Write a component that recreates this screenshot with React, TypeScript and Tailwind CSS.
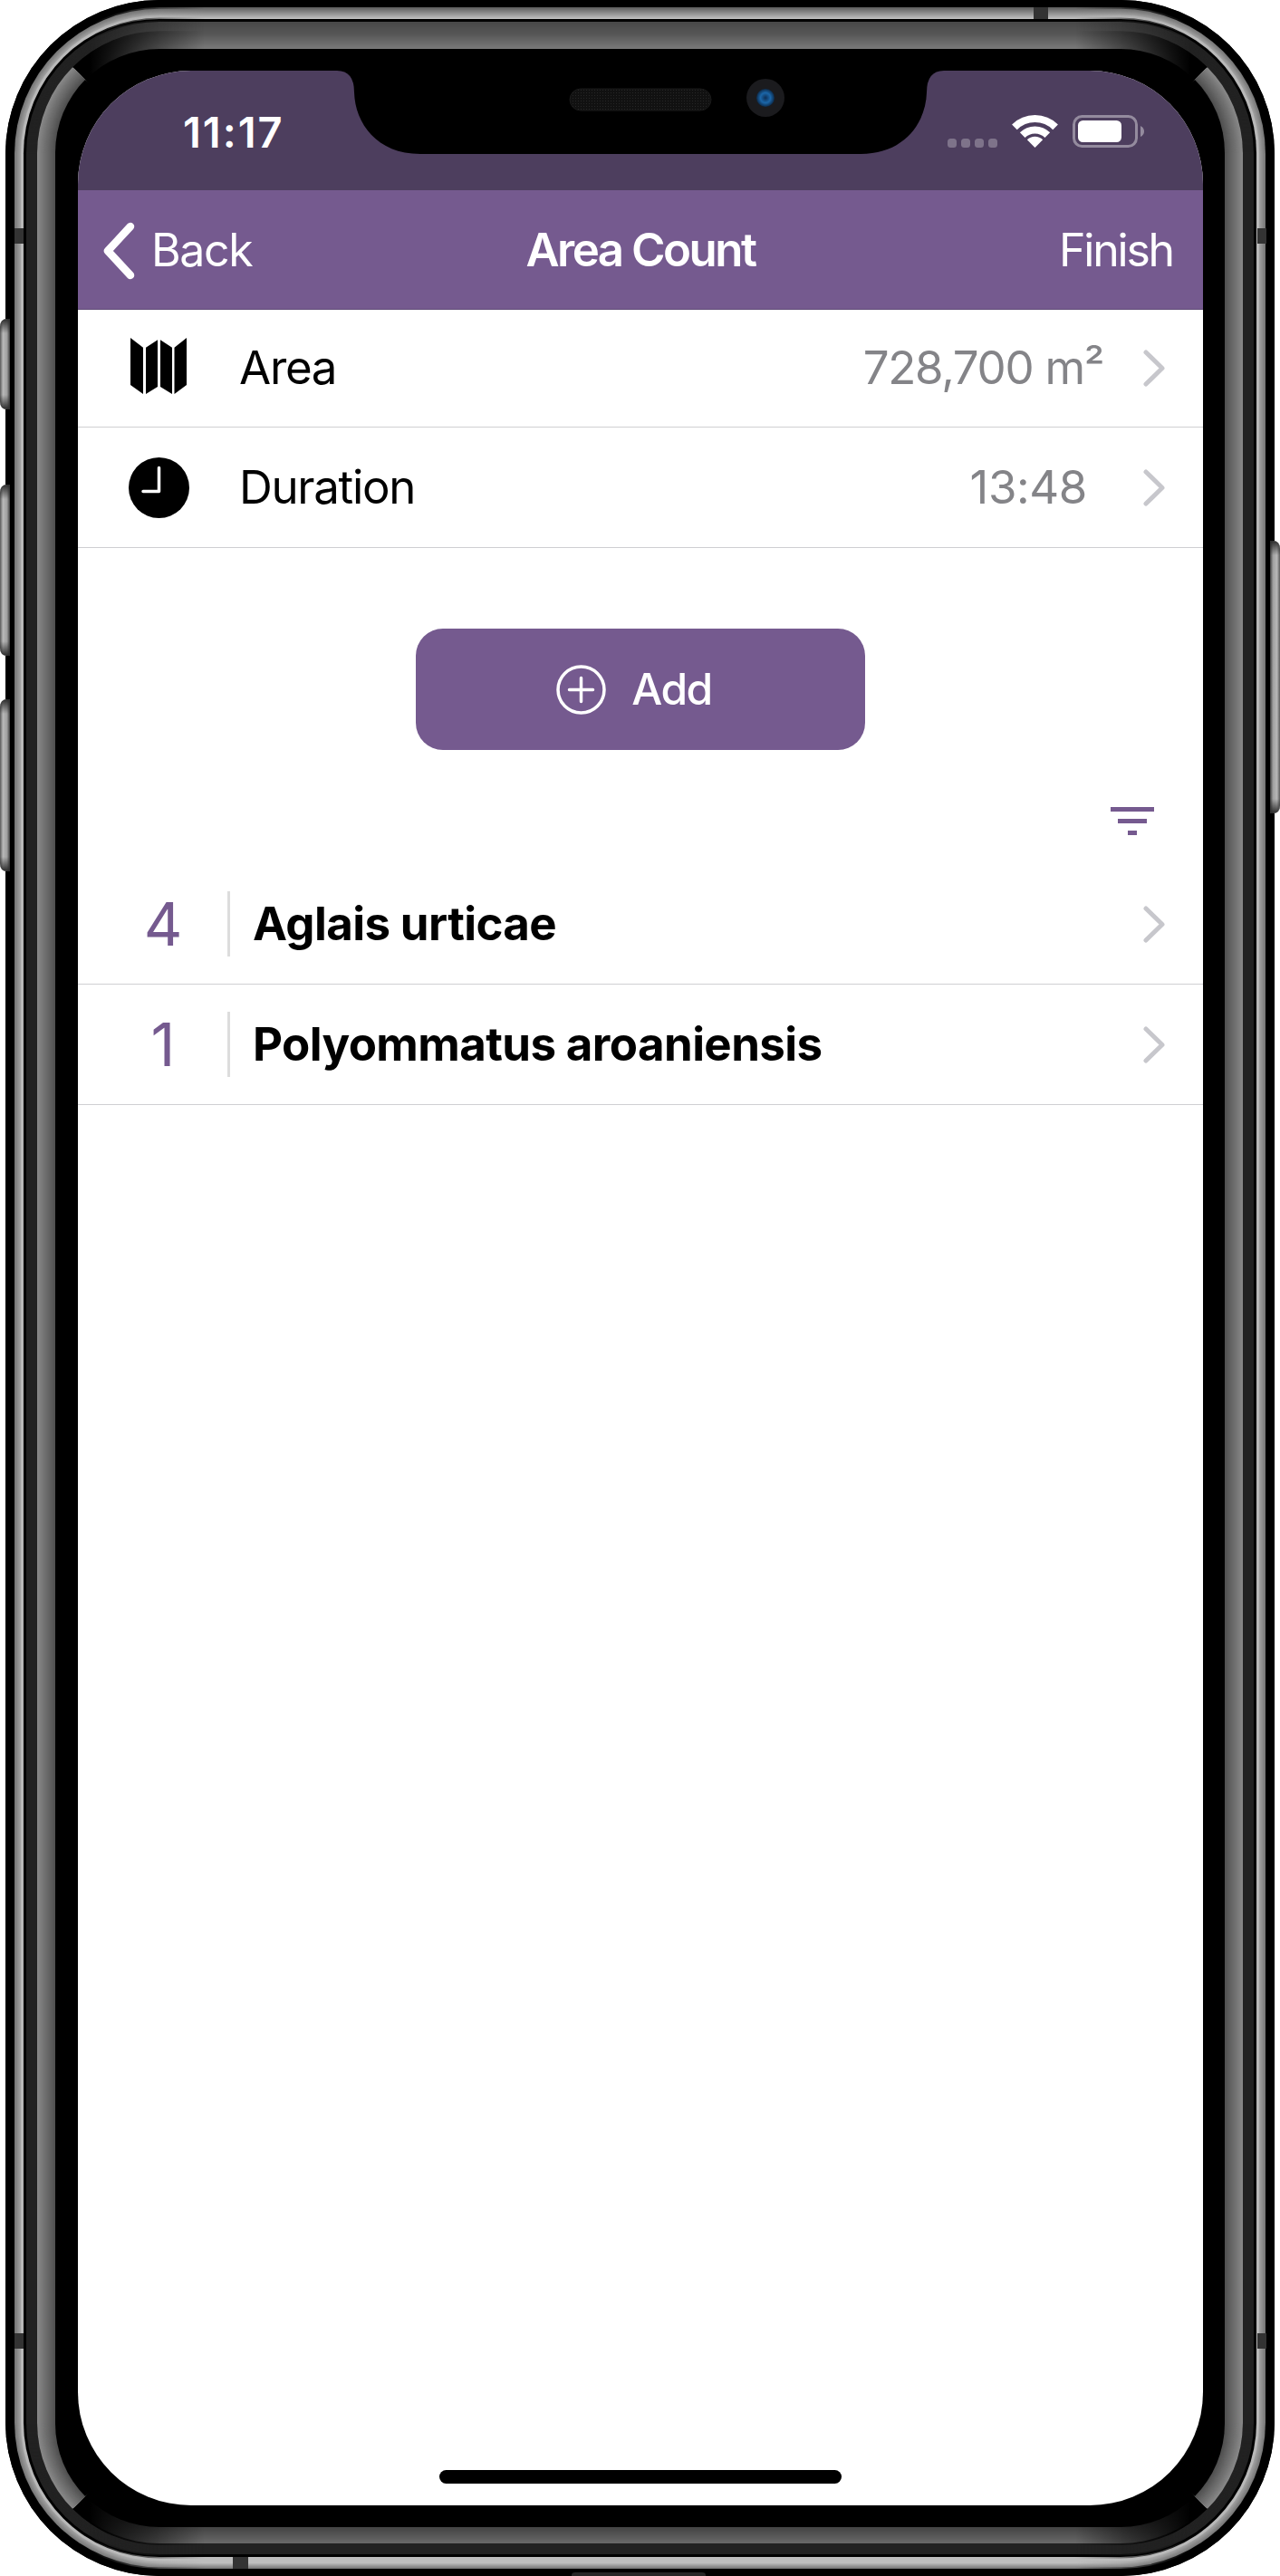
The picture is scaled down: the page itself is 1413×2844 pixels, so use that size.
import React from "react";

type Ring = { inset: number; gray: number };

// a run of 1px rings going from one gray to another, outside to inside
const ramp = (a: number, b: number, from: number, to: number): Ring[] => {
  const steps = Math.max(1, Math.round(b - a));
  return Array.from({ length: steps }, (_, i) => ({
    inset: a + ((b - a) * i) / steps,
    gray: Math.round(from + ((to - from) * i) / Math.max(1, steps - 1)),
  }));
};

const y = (v: number) => v / 0.975;

const topRings = [
  ...ramp(y(8), y(21), 95, 190),
  ...ramp(y(21), y(24), 0, 0),
  ...ramp(y(24), y(36), 72, 84),
  ...ramp(y(36), y(54), 84, 120),
  ...ramp(y(54), 80, 0, 0),
];
const bottomRings = [
  ...ramp(y(8), y(15), 120, 190),
  ...ramp(y(15), y(21), 190, 190),
  ...ramp(y(21), y(24), 0, 0),
  ...ramp(y(24), y(36), 34, 34),
  ...ramp(y(36), y(54), 104, 68),
  ...ramp(y(54), 80, 0, 0),
];
// runs all the way round the body
const baseRings = [
  ...ramp(0, 10, 0, 0),
  ...ramp(10, 17, 120, 160),
  ...ramp(17, 20, 185, 185),
  ...ramp(20, 23, 0, 0),
  ...ramp(23, 35, 34, 34),
  ...ramp(35, 80, 0, 0),
];
const sideRings = [...ramp(35, 55, 136, 80), ...ramp(55, 80, 0, 0)];

const RingStack = ({ rings, clip, mask }: { rings: Ring[]; clip?: string; mask?: string }) => (
  <g clipPath={clip ? `url(#${clip})` : undefined} mask={mask ? `url(#${mask})` : undefined}>
    {rings.map((r) => (
      <rect
        key={r.inset}
        x={6 + r.inset}
        y={r.inset * 0.975}
        width={1401 - 2 * r.inset}
        height={2844 - 2 * r.inset * 0.975}
        rx={170 - r.inset}
        fill={`rgb(${r.gray},${r.gray},${r.gray})`}
      />
    ))}
  </g>
);

const SideButton = ({ top, height, right }: { top: number; height: number; right?: boolean }) => (
  <g transform={right ? "translate(1413,0) scale(-1,1)" : undefined}>
    <path
      d={`M11 ${top} H8 Q0 ${top} 0 ${top + 9} V${top + height - 9} Q0 ${top + height} 8 ${top + height} H11 Z`}
      fill="url(#btnH)"
    />
    <path
      d={`M11 ${top} H8 Q0 ${top} 0 ${top + 9} V${top + 16} H11 Z`}
      fill="url(#btnTop)"
    />
    <path
      d={`M11 ${top + height} H8 Q0 ${top + height} 0 ${top + height - 9} V${top + height - 16} H11 Z`}
      fill="url(#btnBottom)"
    />
  </g>
);

// the phone body, buttons and antenna bands
const PhoneFrame = () => (
  <svg className="absolute inset-0" width="1413" height="2844" viewBox="0 0 1413 2844">
    <defs>
      <clipPath id="wedgeTop">
        <polygon points="6,0 1407,0 1237,170 176,170" />
      </clipPath>
      <clipPath id="wedgeBottom">
        <polygon points="6,2844 1407,2844 1237,2674 176,2674" />
      </clipPath>
      <clipPath id="wedgeSides">
        <polygon points="6,0 176,170 176,2674 6,2844 0,2844 0,0" />
        <polygon points="1407,0 1237,170 1237,2674 1407,2844 1413,2844 1413,0" />
      </clipPath>
      <linearGradient id="fadeEnds" gradientUnits="userSpaceOnUse" x1="0" x2="1413" y1="0" y2="0">
        <stop offset="0.07" stopColor="#000" />
        <stop offset="0.16" stopColor="#fff" />
        <stop offset="0.84" stopColor="#fff" />
        <stop offset="0.93" stopColor="#000" />
      </linearGradient>
      <mask id="fadeMask" maskUnits="userSpaceOnUse" x="0" y="0" width="1413" height="2844">
        <rect width="1413" height="2844" fill="url(#fadeEnds)" />
      </mask>
      <linearGradient id="btnH" x1="0" x2="1" y1="0" y2="0">
        <stop offset="0" stopColor="#5a5a5a" />
        <stop offset="0.3" stopColor="#b8b8b8" />
        <stop offset="0.7" stopColor="#a0a0a0" />
        <stop offset="1" stopColor="#3a3a3a" />
      </linearGradient>
      <linearGradient id="btnTop" x1="0" x2="0" y1="0" y2="1">
        <stop offset="0" stopColor="#2a2a2a" />
        <stop offset="1" stopColor="#2a2a2a" stopOpacity="0" />
      </linearGradient>
      <linearGradient id="btnBottom" x1="0" x2="0" y1="1" y2="0">
        <stop offset="0" stopColor="#2a2a2a" />
        <stop offset="1" stopColor="#2a2a2a" stopOpacity="0" />
      </linearGradient>
    </defs>
    <rect x="6" y="0" width="1401" height="2844" rx="170" fill="#000" />
    <RingStack rings={baseRings} />
    <RingStack rings={sideRings} clip="wedgeSides" />
    <g mask="url(#fadeMask)">
      <RingStack rings={topRings} clip="wedgeTop" />
      <RingStack rings={bottomRings} clip="wedgeBottom" />
    </g>

    <rect x="16" y="252" width="10" height="17" fill="#333" />
    <rect x="1388" y="252" width="10" height="17" fill="#333" />
    <rect x="16" y="2576" width="10" height="17" fill="#333" />
    <rect x="1388" y="2576" width="10" height="17" fill="#333" />
    <rect x="1141" y="8" width="16" height="13" fill="#333" />
    <rect x="257" y="2823" width="17" height="13" fill="#333" />
    <path d="M631 2844 V2843 Q631 2840 635 2840 H775 Q779 2840 779 2843 V2844 Z" fill="#262626" />

    <SideButton top={352} height={100} />
    <SideButton top={535} height={189} />
    <SideButton top={772} height={190} />
    <SideButton top={597} height={301} right />
  </svg>
);

// notch with speaker and camera, drawn in screen coordinates
const Notch = () => (
  <svg className="absolute left-0 top-0" width="1242" height="100" viewBox="0 0 1242 100">
    <defs>
      <pattern id="mesh" width="3" height="3" patternUnits="userSpaceOnUse">
        <rect width="3" height="3" fill="#111" />
        <rect width="1" height="1" fill="#262626" />
      </pattern>
      <radialGradient id="lens">
        <stop offset="0" stopColor="#0d2f57" />
        <stop offset="0.55" stopColor="#1b66a8" />
        <stop offset="1" stopColor="#0c2a4a" />
      </radialGradient>
    </defs>
    <path
      d="M286 0 Q305 0 305 24 C306 58 330 92 378 92 H864 C912 92 936 58 937 24 Q937 0 956 0 Z"
      fill="#000"
    />
    <rect x="543" y="20" width="156" height="24" rx="12" fill="url(#mesh)" stroke="#1a1a1a" strokeWidth="1" />
    <circle cx="759" cy="30" r="21" fill="#1b1b1e" />
    <circle cx="759" cy="30" r="10" fill="url(#lens)" />
  </svg>
);

const StatusIcons = () => (
  <svg width="218" height="36" viewBox="0 0 218 36">
    <g fill="#fff" fillOpacity="0.28">
      <rect x="0" y="26" width="10" height="10" rx="3.5" />
      <rect x="15" y="26" width="10" height="10" rx="3.5" />
      <rect x="30" y="26" width="10" height="10" rx="3.5" />
      <rect x="45" y="26" width="10" height="10" rx="3.5" />
    </g>
    <g transform="translate(72,0)">
      <path d="M1.9 13.4 A32 32 0 0 1 47.1 13.4" fill="none" stroke="#fff" strokeWidth="8" />
      <path d="M10.7 22.2 A19.5 19.5 0 0 1 38.3 22.2" fill="none" stroke="#fff" strokeWidth="8" />
      <path d="M24.5 36 L15.8 27.3 A12.3 12.3 0 0 1 33.2 27.3 Z" fill="#fff" />
    </g>
    <rect x="139.5" y="1.5" width="69" height="33" rx="9" fill="none" stroke="#fff" strokeOpacity="0.4" strokeWidth="3" />
    <rect x="144" y="6" width="48" height="24" rx="5.5" fill="#fff" />
    <path d="M213 12 Q217 14 217 18 Q217 22 213 24 Z" fill="#fff" fillOpacity="0.4" />
  </svg>
);

const BackChevron = () => (
  <svg width="38" height="64" viewBox="0 0 38 64">
    <path d="M31 5 L6 32 L31 59" fill="none" stroke="#fff" strokeWidth="8.5" strokeLinecap="round" strokeLinejoin="round" />
  </svg>
);

const Chevron = () => (
  <svg width="24" height="41" viewBox="0 0 24 41">
    <path d="M3 3 L21 20.5 L3 38" fill="none" stroke="#c7c7cc" strokeWidth="5" strokeLinecap="round" strokeLinejoin="round" />
  </svg>
);

const MapIcon = () => (
  <svg className="mb-[5px]" width="62" height="62" viewBox="0 0 62 62">
    <polygon points="0,0 14,10.7 14,62 0,52" fill="#000" />
    <polygon points="17,10.7 30,2.3 30,54 17,62" fill="#000" />
    <polygon points="33,2.3 46,10.7 46,62 33,54" fill="#000" />
    <polygon points="48.5,10.7 62,0 62,52 48.5,62" fill="#000" />
  </svg>
);

const ClockIcon = () => (
  <svg width="67" height="67" viewBox="0 0 67 67">
    <circle cx="33.5" cy="33.5" r="33.5" fill="#000" />
    <path d="M33.5 11.5 V37.5 H16" fill="none" stroke="#fff" strokeWidth="3.5" strokeLinecap="round" strokeLinejoin="round" />
  </svg>
);

const PlusCircle = () => (
  <svg width="55" height="55" viewBox="0 0 55 55">
    <circle cx="27.5" cy="27.5" r="25.5" fill="none" stroke="#fff" strokeWidth="3.5" />
    <path d="M27.5 14.5 V40.5 M14.5 27.5 H40.5" fill="none" stroke="#fff" strokeWidth="3.5" strokeLinecap="round" />
  </svg>
);

const InfoRow = ({
  icon,
  label,
  value,
  rowClass,
  valueClass,
}: {
  icon: React.ReactNode;
  label: string;
  value: string;
  rowClass: string;
  valueClass: string;
}) => (
  <div className={`flex items-center border-b border-[#cfcfd2] ${rowClass}`}>
    <div className="flex w-[178px] justify-center">{icon}</div>
    <span className="text-[51px] tracking-[-1.3px] text-black">{label}</span>
    <span className={`ml-auto text-[51px] text-[#848488] ${valueClass}`}>{value}</span>
    <div className="mr-[42px] ml-[44px]">
      <Chevron />
    </div>
  </div>
);

const SpeciesRow = ({ count, name }: { count: string; name: string }) => (
  <div className="flex h-[133px] items-center border-b border-[#cfcfd2]">
    <span className="w-[165px] pl-[23px] text-center text-[66px] leading-none text-[#755a8f]">{count}</span>
    <div className="h-[72px] w-[3px] bg-[#dddddd]" />
    <span className="ml-[25px] text-[51px] font-bold tracking-[-0.6px] text-black">{name}</span>
    <div className="mr-[42px] ml-auto">
      <Chevron />
    </div>
  </div>
);

export default function App() {
  return (
    <div className="relative h-[2844px] w-[1413px] overflow-hidden bg-white pt-[78px] font-['Inter',sans-serif]">
      <PhoneFrame />
      <div className="relative mx-[86px] h-[2688px] w-[1242px] overflow-hidden rounded-[125px] bg-white">
        <div className="relative flex h-[132px] items-start bg-[#4d3e5e]">
          <Notch />
          <span className="mt-[34px] ml-[116px] text-[47px] leading-[68px] font-semibold tracking-[2px] text-white">
            11:17
          </span>
          <div className="absolute top-[49px] left-[960px]">
            <StatusIcons />
          </div>
        </div>

        <div className="relative flex h-[132px] items-center border-b border-[#5f4a75] bg-[#755a8f] pt-[2px] text-white">
          <div className="ml-[27px] flex items-center">
            <BackChevron />
            <span className="ml-[16px] text-[50px] tracking-[-1.4px]">Back</span>
          </div>
          <span className="absolute left-0 w-full text-center text-[51px] font-semibold tracking-[-2.5px]">
            Area Count
          </span>
          <span className="mr-[33px] ml-auto text-[50px] tracking-[-2.2px]">Finish</span>
        </div>

        <InfoRow
          icon={<MapIcon />}
          label="Area"
          value="728,700 m²"
          rowClass="h-[130px]"
          valueClass="tracking-[-1.3px]"
        />
        <InfoRow
          icon={<ClockIcon />}
          label="Duration"
          value="13:48"
          rowClass="h-[133px]"
          valueClass="mr-[18px] tracking-[-0.4px]"
        />

        <button className="mx-auto mt-[89px] flex h-[134px] w-[496px] items-center justify-center gap-[28px] rounded-[30px] bg-[#755a8f] pr-[14px] text-[48px] font-medium tracking-[-1.5px] text-white">
          <PlusCircle />
          Add
        </button>

        <div className="mt-[63px] mr-[54px] flex h-[31px] flex-col items-end">
          <div className="flex w-[48px] flex-col items-center gap-[8px]">
            <div className="h-[5px] w-[48px] bg-[#755a8f]" />
            <div className="h-[5px] w-[32px] bg-[#755a8f]" />
            <div className="h-[5px] w-[10px] bg-[#755a8f]" />
          </div>
        </div>

        <div className="mt-[32px]">
          <SpeciesRow count="4" name="Aglais urticae" />
          <SpeciesRow count="1" name="Polyommatus aroaniensis" />
        </div>

        <div className="absolute bottom-[24px] left-[399px] h-[15px] w-[444px] rounded-full bg-black" />
      </div>
    </div>
  );
}
